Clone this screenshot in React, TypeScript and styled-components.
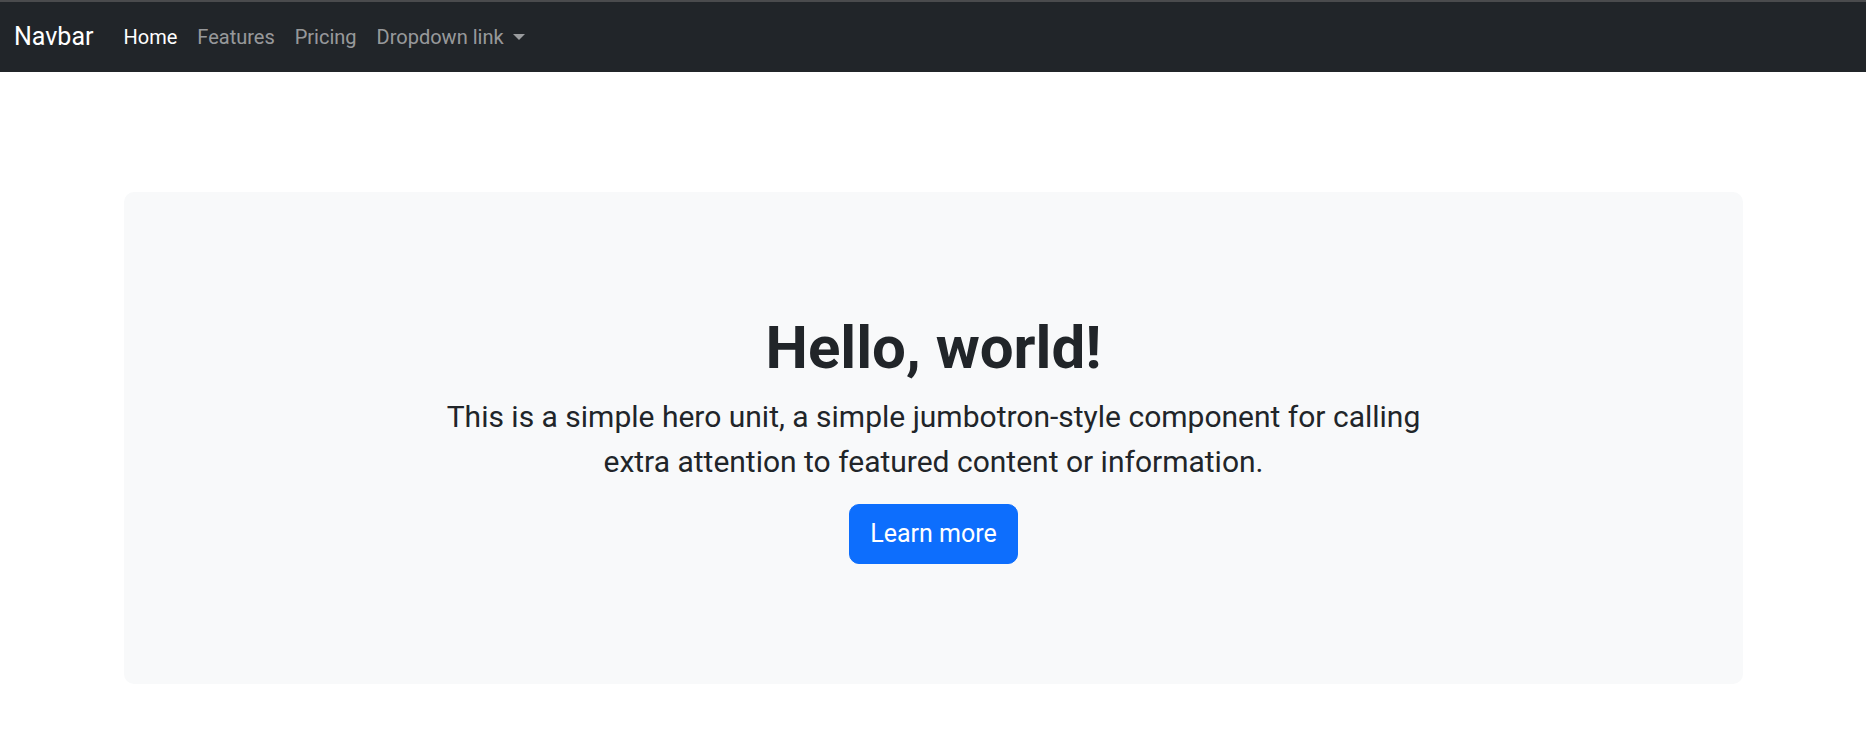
import styled, { createGlobalStyle } from "styled-components";

const GlobalStyle = createGlobalStyle`
  * {
    box-sizing: border-box;
  }
  body {
    margin: 0;
    background: #ffffff;
    color: #212529;
    font-family: Roboto, "Liberation Sans", Arial, sans-serif;
    font-size: 20px;
    line-height: 1.5;
  }
`;

const Navbar = styled.nav`
  background-color: #212529;
  border-top: 2px solid #4a4b4d;
  height: 72px;
  padding: 10px 14px;
  display: flex;
  align-items: center;
`;

const Brand = styled.a`
  color: #ffffff;
  font-size: 25px;
  line-height: 1.5;
  padding: 6px 0;
  margin-right: 20px;
  text-decoration: none;
`;

const NavList = styled.ul`
  display: flex;
  list-style: none;
  margin: 0;
  padding: 0;
`;

const NavLink = styled.a<{ $active?: boolean }>`
  display: flex;
  align-items: center;
  padding: 10px;
  font-size: 20px;
  line-height: 1.5;
  color: ${(props) => (props.$active ? "#ffffff" : "rgba(255, 255, 255, 0.55)")};
  text-decoration: none;
`;

const Caret = styled.span`
  display: inline-block;
  margin-left: 9px;
  border-top: 6px solid rgba(255, 255, 255, 0.55);
  border-left: 6px solid transparent;
  border-right: 6px solid transparent;
`;

const Main = styled.main`
  width: 1620px;
  margin: 120px auto 0;
  padding-left: 1px;
`;

const Hero = styled.section`
  background-color: #f8f9fa;
  border-radius: 10px;
  padding: 120px 75px;
  display: flex;
  flex-direction: column;
  align-items: center;
  text-align: center;
`;

const Title = styled.h1`
  margin: 0 0 10px;
  font-size: 60px;
  font-weight: 700;
  line-height: 1.2;
  color: #212529;
`;

const Lead = styled.p`
  margin: 0 0 20px;
  max-width: 980px;
  font-size: 30px;
  line-height: 1.5;
  color: #212529;
`;

const Button = styled.button`
  background-color: #0d6efd;
  color: #ffffff;
  border: 1px solid #0d6efd;
  border-radius: 10px;
  padding: 10px 20px;
  font-family: inherit;
  font-size: 25px;
  line-height: 1.5;
  cursor: pointer;
`;

const links = ["Home", "Features", "Pricing"];

export default function App() {
  return (
    <>
      <GlobalStyle />
      <Navbar>
        <Brand href="#">Navbar</Brand>
        <NavList>
          {links.map((label, i) => (
            <li key={label}>
              <NavLink href="#" $active={i === 0}>
                {label}
              </NavLink>
            </li>
          ))}
          <li>
            <NavLink href="#">
              Dropdown link
              <Caret />
            </NavLink>
          </li>
        </NavList>
      </Navbar>
      <Main>
        <Hero>
          <Title>Hello, world!</Title>
          <Lead>
            This is a simple hero unit, a simple jumbotron-style component for calling
            extra attention to featured content or information.
          </Lead>
          <Button type="button">Learn more</Button>
        </Hero>
      </Main>
    </>
  );
}
